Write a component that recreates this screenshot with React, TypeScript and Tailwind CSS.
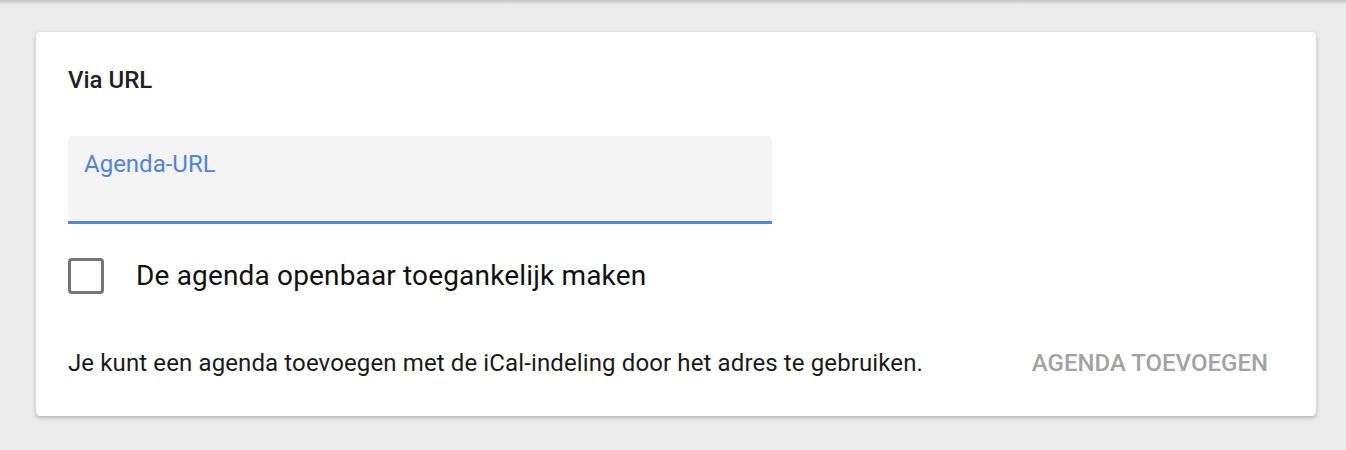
export default function App() {
  return (
    <div className="relative min-h-[450px] bg-[#ececec] font-['Roboto',sans-serif]">
      <div className="absolute left-0 right-0 top-0 h-[5px] bg-gradient-to-b from-[#c4c4c4] to-[#ececec]" />
      <div className="pl-[36px] pr-[30px] pt-[32px]">
        <div className="rounded-[4px] bg-white px-[32px] pb-[37px] pt-[32px] shadow-[0_2px_4px_rgba(0,0,0,0.25)]">
          <h2 className="text-[24px] font-medium leading-[32px] text-[#212121]">Via URL</h2>
          <div className="mt-[40px] h-[88px] w-[704px] rounded-t-[4px] border-b-[3px] border-[#4d86ee] bg-[#f4f4f4] px-[16px] pt-[12px]">
            <span className="text-[24px] leading-[32px] text-[#4f82ea]">Agenda-URL</span>
          </div>
          <div className="mt-[34px] flex items-center gap-[32px]">
            <div className="h-[36px] w-[36px] rounded-[4px] border-[3px] border-[#757575]" />
            <span className="text-[28px] leading-[36px] tracking-[0.16px] text-[#111]">
              De agenda openbaar toegankelijk maken
            </span>
          </div>
          <div className="mt-[53px] flex items-center justify-between">
            <p className="text-[24px] leading-[32px] tracking-[0.12px] text-[#1a1a1a]">
              Je kunt een agenda toevoegen met de iCal-indeling door het adres te gebruiken.
            </p>
            <button className="mr-[16px] text-[24px] font-medium leading-[32px] text-[#a3a3a3]">
              AGENDA TOEVOEGEN
            </button>
          </div>
        </div>
      </div>
    </div>
  );
}
